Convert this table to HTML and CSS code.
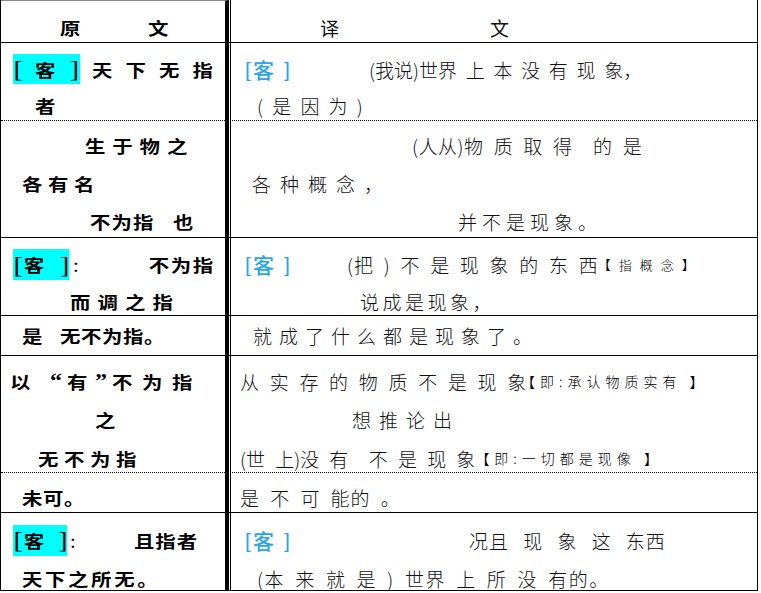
FILE: index.html
```html
<!DOCTYPE html>
<html lang="zh-CN">
<head>
<meta charset="utf-8">
<title>原文 译文</title>
<link rel="stylesheet" href="styles.css">
</head>
<body>
<div class="sheet">
  <div class="row row-head">
    <div class="cell left"><div class="ln"><span class="h-yuan">原文</span></div></div>
    <div class="cell right"><div class="ln"><span class="h-yi">译文</span></div></div>
  </div>

  <div class="row row-1 dotted">
    <div class="cell left">
      <div class="ln"><span class="kbox kb1"><span class="br">[</span><span class="kc">客</span><span class="br br-r">]</span></span><span class="s1a">天下无指</span></div>
      <div class="ln"><span class="s1b">者</span></div>
    </div>
    <div class="cell right">
      <div class="ln"><span class="key"><span class="kb">[</span><span class="kk">客</span><span class="kb kb-r">]</span></span><span class="t1a">(我说)世界 上 本 没 有 现 象，</span></div>
      <div class="ln"><span class="t1b">( 是 因 为 )</span></div>
    </div>
  </div>

  <div class="row row-2">
    <div class="cell left">
      <div class="ln"><span class="s2a">生于物之</span></div>
      <div class="ln"><span class="s2b">各有名</span></div>
      <div class="ln"><span class="s2c">不为指</span><span class="s2d">也</span></div>
    </div>
    <div class="cell right">
      <div class="ln"><span class="t2a">(人从)物 质 取 得  的 是</span></div>
      <div class="ln"><span class="t2b">各种概念，</span></div>
      <div class="ln"><span class="t2c">并不是现象。</span></div>
    </div>
  </div>

  <div class="row row-3">
    <div class="cell left">
      <div class="ln"><span class="kbox kb2"><span class="br">[</span><span class="kc">客</span><span class="br br-r">]</span></span><span class="colon">:</span><span class="s3a">不为指</span></div>
      <div class="ln"><span class="s3b">而调之指</span></div>
    </div>
    <div class="cell right">
      <div class="ln"><span class="key"><span class="kb">[</span><span class="kk">客</span><span class="kb kb-r">]</span></span><span class="t3a">(把 ) 不 是 现 象 的 东 西</span><span class="note note-3">【指概念】</span></div>
      <div class="ln"><span class="t3b">说成是现象，</span></div>
    </div>
  </div>

  <div class="row row-4">
    <div class="cell left">
      <div class="ln"><span class="s4a">是</span><span class="s4b">无不为指。</span></div>
    </div>
    <div class="cell right">
      <div class="ln"><span class="t4">就成了什么都是现象了。</span></div>
    </div>
  </div>

  <div class="row row-5 dotted">
    <div class="cell left">
      <div class="ln"><span class="s5a">以</span><span class="q q1">“</span><span class="s5b">有</span><span class="q q2">”</span><span class="s5c">不为指</span></div>
      <div class="ln"><span class="s5d">之</span></div>
      <div class="ln"><span class="s5e">无不为指</span></div>
    </div>
    <div class="cell right">
      <div class="ln"><span class="t5a">从实存的物质不是现象</span><span class="note note-5a">【即:承认物质实有 】</span></div>
      <div class="ln"><span class="t5b">想推论出</span></div>
      <div class="ln"><span class="t5c">(世 上)没 有  不 是 现 象</span><span class="note note-5b">【即:一切都是现像 】</span></div>
    </div>
  </div>

  <div class="row row-6">
    <div class="cell left">
      <div class="ln"><span class="s6">未可。</span></div>
    </div>
    <div class="cell right">
      <div class="ln"><span class="t6">是 不 可 能的 。</span></div>
    </div>
  </div>

  <div class="row row-7">
    <div class="cell left">
      <div class="ln"><span class="kbox kb3"><span class="br">[</span><span class="kc">客</span><span class="br br-r">]</span></span><span class="colon colon-7">:</span><span class="s7a">且指者</span></div>
      <div class="ln"><span class="s7b">天下之所无。</span></div>
    </div>
    <div class="cell right">
      <div class="ln"><span class="key"><span class="kb">[</span><span class="kk">客</span><span class="kb kb-r">]</span></span><span class="t7a">况且 现 象 这 东西</span></div>
      <div class="ln"><span class="t7b">(本 来 就 是 ) 世界 上 所 没 有的。</span></div>
    </div>
  </div>
</div>
</body>
</html>
```

FILE: styles.css
```css
html, body {
  margin: 0;
  padding: 0;
  background: #fff;
}

.sheet {
  width: 758px;
  box-sizing: border-box;
  border: 1px solid #000;
  border-top: 0;
  color: #000;
}

.row {
  display: grid;
  grid-template-columns: 228px 1fr;
  box-sizing: border-box;
  border-bottom: 1px solid #000;
}
.row.dotted { border-bottom: 1px dotted #000; }
.row-7 { border-bottom: 0; }

.cell { box-sizing: border-box; min-width: 0; }
.cell.left {
  border-right: 4px solid #000;
  font-family: "Noto Sans CJK SC", sans-serif;
  font-weight: 700;
  font-size: 17px;
  line-height: 1;
}
.cell.right {
  border-left: 1px solid #000;
  margin-left: 1px;
  font-family: "Noto Sans CJK SC", sans-serif;
  font-weight: 300;
  font-size: 19px;
  line-height: 1;
  word-spacing: 5px;
  color: #111;
}

.ln {
  display: flex;
  align-items: center;
  white-space: pre;
}
.ln > span { flex: none; }
.left .ln {
  transform: scaleX(1.2);
  transform-origin: 0 50%;
}

/* row geometry */
.row-head { height: 43px; }
.row-head .left { border-top: 1px solid #888; padding-top: 10px; }
.row-head .right { padding-top: 11px; }
.row-head .ln { height: 32px; }

.row-1 { height: 78px; }
.row-1 .cell { padding-top: 8px; }
.row-1 .ln { height: 36px; }

.row-2 { height: 117px; }
.row-2 .cell { padding-top: 5px; }
.row-2 .ln { height: 38px; }

.row-3 { height: 78px; }
.row-3 .cell { padding-top: 8px; }
.row-3 .ln { height: 37px; }

.row-4 { height: 40px; }
.row-4 .cell { padding-top: 5px; }
.row-4 .ln { height: 29px; }

.row-5 { height: 117px; }
.row-5 .cell { padding-top: 6px; }
.row-5 .ln { height: 38.5px; }

.row-6 { height: 40px; }
.row-6 .cell { padding-top: 10px; }
.row-6 .ln { height: 29px; }

.row-7 { height: 77px; }
.row-7 .cell { padding-top: 8px; }
.row-7 .ln { height: 38px; }

/* header */
.h-yuan { margin-left: 49.2px; letter-spacing: 56.3px; }
.h-yi { margin-left: 89px; letter-spacing: 151px; font-weight: 400; }

/* cyan key boxes (left column) */
.kbox {
  display: flex;
  align-items: center;
  background: #00ffff;
  margin-left: 10px;
}
.kbox .br {
  font-family: "Liberation Serif", serif;
  font-weight: 400;
  font-size: 24px;
  margin-left: 0.5px;
}
.kb1 { width: 55.8px; height: 30px; }
.kb1 .kc { margin-left: 9.8px; }
.kb1 .br-r { margin-left: 11.7px; }
.kb2 { width: 46.7px; height: 31px; }
.kb2 .kc { margin-left: 0.5px; }
.kb2 .br-r { margin-left: 13px; }
.kb3 { width: 45px; height: 31px; }
.kb3 .kc { margin-left: 0.5px; }
.kb3 .br-r { margin-left: 11.5px; }

.colon { font-weight: 400; margin-left: 3.3px; }
.colon-7 { margin-left: 2.5px; }

/* left column text */
.s1a { margin-left: 10px; letter-spacing: 10.9px; }
.s1b { margin-left: 28.3px; }
.s2a { margin-left: 70px; letter-spacing: 5.75px; }
.s2b { margin-left: 17.5px; letter-spacing: 4.7px; }
.s2c { margin-left: 74.2px; letter-spacing: 0.9px; }
.s2d { margin-left: 15.4px; }
.s3a { margin-left: 58.5px; letter-spacing: 1.3px; }
.s3b { margin-left: 57.5px; letter-spacing: 5.9px; }
.s4a { margin-left: 17.5px; }
.s4b { margin-left: 14.7px; letter-spacing: 0.5px; }
.s5a { margin-left: 7.5px; }
.q {
  font-family: "Liberation Serif", serif;
  font-weight: 700;
  font-size: 20px;
}
.q1 { margin-left: 16.3px; }
.s5b { margin-left: 4.2px; }
.q2 { margin-left: 6.3px; }
.s5c { margin-left: 4.2px; letter-spacing: 8px; }
.s5d { margin-left: 78.3px; }
.s5e { margin-left: 30.8px; letter-spacing: 4.7px; }
.s6 { margin-left: 17.5px; letter-spacing: 0.5px; }
.s7a { margin-left: 48.5px; letter-spacing: 0.9px; }
.s7b { margin-left: 17.5px; letter-spacing: 2.2px; }

/* blue key (right column) */
.key {
  display: flex;
  align-items: center;
  color: #2aa6e2;
  margin-left: 14px;
}
.key .kb {
  font-family: "Liberation Sans", sans-serif;
  font-weight: 400;
  font-size: 21px;
}
.key .kk { font-size: 21px; font-weight: 500; margin-left: 2.2px; }
.key .kb-r { margin-left: 10px; }

.note {
  color: #000;
  word-spacing: 0;
}
.note-3 { font-size: 13px; letter-spacing: 8px; margin-left: -1px; }
.note-5a { font-size: 14px; letter-spacing: 5px; margin-left: -16px; }
.note-5b { font-size: 14px; letter-spacing: 5px; margin-left: 0; }

/* right column text */
.t1a { margin-left: 79.2px; word-spacing: 4.5px; }
.t1b { margin-left: 26px; }
.t2a { margin-left: 181px; letter-spacing: 0.5px; word-spacing: 5.5px; }
.t2b { margin-left: 21px; letter-spacing: 9px; }
.t2c { margin-left: 227px; letter-spacing: 5px; }
.t3a { margin-left: 57.2px; letter-spacing: 1px; word-spacing: 4.5px; }
.t3b { margin-left: 129px; letter-spacing: 3.5px; }
.t4 { margin-left: 22px; letter-spacing: 7px; }
.t5a { margin-left: 9px; letter-spacing: 10.7px; }
.t5b { margin-left: 121px; letter-spacing: 8px; }
.t5c { margin-left: 9px; word-spacing: 6px; }
.t6 { margin-left: 9px; letter-spacing: 1px; }
.t7a { margin-left: 179.2px; letter-spacing: 1px; word-spacing: 9px; }
.t7b { margin-left: 26px; letter-spacing: 1.5px; word-spacing: 4.5px; }
```
